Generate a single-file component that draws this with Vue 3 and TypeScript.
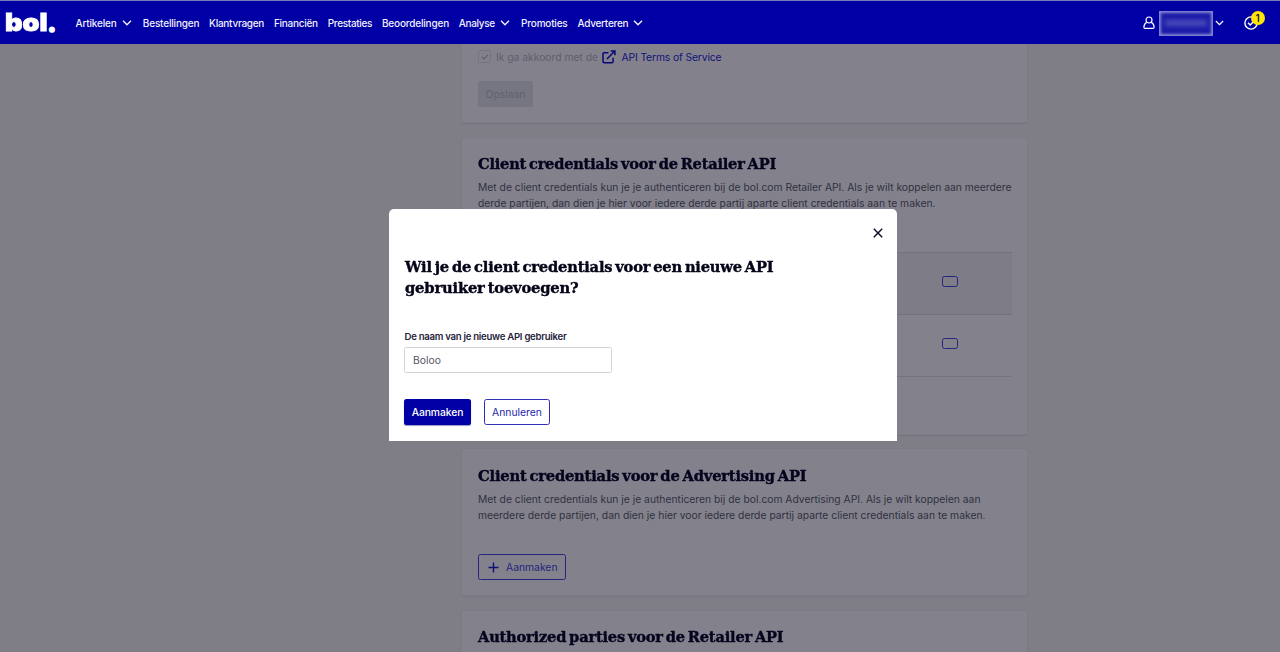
<script setup lang="ts">
interface NavItem { label: string; width: number; menu?: boolean }
interface Fit { w: number; squeeze?: boolean }

const nav: NavItem[] = [
  { label: 'Artikelen', width: 41, menu: true },
  { label: 'Bestellingen', width: 56.5 },
  { label: 'Klantvragen', width: 55 },
  { label: 'Financiën', width: 44 },
  { label: 'Prestaties', width: 44.5 },
  { label: 'Beoordelingen', width: 67 },
  { label: 'Analyse', width: 36, menu: true },
  { label: 'Promoties', width: 46.5 },
  { label: 'Adverteren', width: 51, menu: true },
]

/* Fits a line of text to a width: by tracking, or by condensing the glyphs. */
const vFit = {
  mounted(el: HTMLElement, binding: { value: Fit }) {
    const { w, squeeze } = binding.value
    const natural = el.getBoundingClientRect().width
    if (squeeze) {
      el.style.transform = `scaleX(${w / natural})`
      el.style.marginRight = `${w - natural}px`
    } else {
      el.style.letterSpacing = `${(w - natural) / (el.textContent ?? '').trim().length}px`
    }
  },
}
</script>

<template>
  <div class="app">
    <header class="bar">
      <div class="logo"><span v-fit="{ w: 42.5, squeeze: true }" class="line">bol</span><span class="dot">.</span></div>
      <nav class="nav">
        <a v-for="item in nav" :key="item.label" class="nav-item">
          <span v-fit="{ w: item.width }" class="line">{{ item.label }}</span>
          <svg v-if="item.menu" class="chev" width="10" height="6" viewBox="0 0 10 6"><path d="M1 .8 5 4.8 9 .8" /></svg>
        </a>
      </nav>
      <div class="account">
        <svg class="user" width="12" height="14" viewBox="0 0 12 14">
          <circle cx="6" cy="4" r="3" />
          <path d="M3.7 6.3C1.8 7.5.9 9.3.9 11.2Q.9 12.4 2 12.4H10Q11.1 12.4 11.1 11.2C11.1 9.3 10.2 7.5 8.3 6.3" />
        </svg>
        <span class="redacted"><i></i></span>
        <svg class="chev" width="9" height="6" viewBox="0 0 10 6"><path d="M1 .8 5 4.8 9 .8" /></svg>
        <div class="tasks">
          <svg width="14" height="14" viewBox="0 0 14 14"><circle cx="7" cy="7" r="6.1" /><path d="M4 6.8 6.2 9.1 10 5.1" /></svg>
          <span class="badge">1</span>
        </div>
      </div>
    </header>

    <main class="page">
      <section class="card terms">
        <div class="agree">
          <span class="check"><svg width="8" height="6" viewBox="0 0 8 6"><path d="M1 2.8 3.1 4.9 7 .9" /></svg></span>
          <span v-fit="{ w: 102 }" class="line">Ik ga akkoord met de</span>
          <svg class="ext" width="14" height="14" viewBox="0 0 14 14"><path d="M6.5 2.7H2.2Q1 2.7 1 3.9V11.6Q1 12.8 2.2 12.8H9.9Q11.1 12.8 11.1 11.6V7.8M4.9 9 12.6 1.2M8.7 1H12.9V5.2" /></svg>
          <a v-fit="{ w: 100 }" class="line">API Terms of Service</a>
        </div>
        <button class="btn off"><span v-fit="{ w: 40 }" class="line">Opslaan</span></button>
      </section>

      <section class="card retailer">
        <h2><span v-fit="{ w: 298, squeeze: true }" class="line">Client credentials voor de Retailer API</span></h2>
        <p>
          <span v-fit="{ w: 533.5 }" class="line">Met de client credentials kun je je authenticeren bij de bol.com Retailer API. Als je wilt koppelen aan meerdere</span>
          <span v-fit="{ w: 457.5 }" class="line">derde partijen, dan dien je hier voor iedere derde partij aparte client credentials aan te maken.</span>
        </p>
        <div class="rows">
          <div v-for="n in 2" :key="n" class="row"><span class="chip"></span></div>
        </div>
      </section>

      <section class="card advertising">
        <h2><span v-fit="{ w: 328.5, squeeze: true }" class="line">Client credentials voor de Advertising API</span></h2>
        <p>
          <span v-fit="{ w: 502.5 }" class="line">Met de client credentials kun je je authenticeren bij de bol.com Advertising API. Als je wilt koppelen aan</span>
          <span v-fit="{ w: 507.5 }" class="line">meerdere derde partijen, dan dien je hier voor iedere derde partij aparte client credentials aan te maken.</span>
        </p>
        <button class="btn add">
          <svg width="11" height="11" viewBox="0 0 11 11"><path d="M5.5 .5V10.5M.5 5.5H10.5" /></svg>
          <span v-fit="{ w: 51.5 }" class="line">Aanmaken</span>
        </button>
      </section>

      <section class="card authorized">
        <h2><span v-fit="{ w: 305.5, squeeze: true }" class="line">Authorized parties voor de Retailer API</span></h2>
      </section>
    </main>

    <div class="modal" role="dialog">
      <button class="close" aria-label="Sluiten">
        <svg width="10" height="10" viewBox="0 0 10 10"><path d="M.8 .8 9.2 9.2M9.2 .8 .8 9.2" /></svg>
      </button>
      <h1>
        <span v-fit="{ w: 368.5, squeeze: true }" class="line">Wil je de client credentials voor een nieuwe API</span>
        <span v-fit="{ w: 173.5, squeeze: true }" class="line">gebruiker toevoegen?</span>
      </h1>
      <label><span v-fit="{ w: 162 }" class="line">De naam van je nieuwe API gebruiker</span></label>
      <div class="input"><span v-fit="{ w: 28 }" class="line">Boloo</span></div>
      <div class="actions">
        <button class="btn primary"><span v-fit="{ w: 51.5 }" class="line">Aanmaken</span></button>
        <button class="btn ghost"><span v-fit="{ w: 50 }" class="line">Annuleren</span></button>
      </div>
    </div>
  </div>
</template>

<style>
body { margin: 0; overflow: hidden; }
</style>

<style scoped>
.app {
  position: relative;
  box-sizing: border-box;
  width: 1280px;
  height: 652px;
  overflow: hidden;
  display: flex;
  flex-direction: column;
  background: #7f7e87;
  font-family: Inter, "Liberation Sans", sans-serif;
  font-size: 10.3px;
  color: #30303f;
}
svg { display: block; fill: none; stroke: currentColor; flex: none; overflow: visible; }
.line { display: inline-block; white-space: nowrap; transform-origin: left center; }
.bar {
  flex: none;
  position: relative;
  z-index: 1;
  box-sizing: border-box;
  height: 44px;
  border-top: 1px solid #7b7bb4;
  background: #0000a4;
  color: #fff;
  display: flex;
  align-items: center;
}
.logo {
  width: 70px;
  padding-left: 5px;
  box-sizing: border-box;
  font-size: 24px;
  font-weight: 900;
  line-height: 29px;
  -webkit-text-stroke: .8px #fff;
  display: flex;
}
.dot { font-family: Lato, sans-serif; font-size: 28px; line-height: 26px; padding-left: 1px; -webkit-text-stroke-width: 1.6px; }
.nav { display: flex; align-items: center; gap: 9.8px; padding: 1px 0 0 5.5px; font-size: 10px; font-weight: 500; }
.nav-item { display: flex; align-items: center; gap: 5px; color: #f0f0ff; }
.chev { stroke-width: 1.4; margin-right: 1.5px; }
.account { margin-left: auto; display: flex; align-items: center; padding: 0 22.5px 0 0; }
.user { stroke-width: 1.2; margin-right: 3.5px; }
.redacted {
  box-sizing: border-box;
  width: 54px;
  height: 25px;
  margin: 1px 2px 0 0;
  background: #1a1aa9;
  box-shadow: inset 0 0 3px 1px #8787d2;
  border: 1px solid #7d7dcd;
  display: flex;
  align-items: center;
  justify-content: center;
}
.redacted i { width: 42px; height: 6px; background: #4d4dbb; filter: blur(2.5px); }
.tasks { position: relative; margin-left: 18.5px; }
.tasks svg { stroke-width: 1.4; }
.badge {
  position: absolute;
  left: 7px;
  top: -5px;
  width: 14px;
  height: 14px;
  border-radius: 50%;
  background: #ffe600;
  color: #16164a;
  font-size: 10px;
  font-weight: 600;
  line-height: 14px;
  text-align: center;
}
.page { width: 565px; margin-left: 462px; flex: 1; display: flex; flex-direction: column; }
.card {
  flex: none;
  box-sizing: border-box;
  padding: 0 16px;
  background: #83828c;
  border-radius: 2px;
  box-shadow: 0 0 0 1px #7c7c87, 0 1px 2px #656473;
}
.terms { height: 78px; margin-bottom: 16px; padding-top: 4px; }
.retailer { height: 296px; margin-bottom: 15px; }
.advertising { height: 146px; margin-bottom: 16px; }
.authorized { height: 80px; }
.agree { display: flex; align-items: center; height: 17px; color: #5f5e6c; }
.agree a { color: #11117a; margin-left: 6px; }
.check {
  box-sizing: border-box;
  width: 13px;
  height: 13px;
  border: 1px solid #757480;
  border-radius: 2px;
  margin-right: 5px;
  display: flex;
  align-items: center;
  justify-content: center;
}
.check svg { stroke-width: 1.1; }
.ext { color: #080878; stroke-width: 1.5; margin: 0 0 0 4px; }
.agree .ext + a { margin-left: 5.5px; }
.btn {
  box-sizing: border-box;
  height: 26px;
  padding: 0 7px;
  border: 1px solid transparent;
  border-radius: 2.5px;
  font: inherit;
  display: flex;
  align-items: center;
  justify-content: center;
}
.btn.off { width: 55px; margin-top: 16px; background: #767582; color: #62616f; border: 0; }
h1, h2 {
  margin: 0;
  font-family: "DejaVu Serif", serif;
  font-weight: 700;
  font-size: 15px;
  line-height: 21px;
  word-spacing: -2px;
  letter-spacing: -.2px;
  -webkit-text-stroke: .4px currentColor;
}
h2 { padding-top: 16px; color: #04041e; }
p { margin: 5px 0 0; line-height: 15.6px; display: flex; flex-direction: column; align-items: flex-start; }
.advertising h2 { padding-top: 17px; }
.rows { margin-top: 41px; margin-right: -1px; }
.row {
  box-sizing: border-box;
  height: 62.3px;
  border-top: 1px solid #737280;
  display: flex;
  align-items: center;
  justify-content: flex-end;
  padding: 0 54px 4px 0;
}
.row:first-child { background: #7e7d87; }
.row:last-child { border-bottom: 1px solid #737280; }
.chip { box-sizing: border-box; width: 16px; height: 11px; border: 1px solid #25257c; border-radius: 2.5px; }
.btn.add { width: 87.5px; margin-top: 31px; background: none; border-color: #25257c; color: #25257c; gap: 7px; padding-left: 9px; }
.add svg { color: #101078; stroke-width: 1.4; }
.modal {
  position: absolute;
  box-sizing: border-box;
  left: 389px;
  top: 209px;
  width: 508px;
  height: 232px;
  padding: 18px 13px 0 15px;
  background: #fff;
  border-radius: 5px 5px 0 0;
}
.close { display: block; margin-left: auto; padding: 1px; border: 0; background: none; color: #10102a; }
.close svg { stroke-width: 1.5; }
h1 { padding: 18px 0 0 1px; color: #050519; display: flex; flex-direction: column; align-items: flex-start; }
label { display: block; margin: 31px 0 0 .5px; height: 13px; line-height: 13px; font-size: 9.6px; font-weight: 600; color: #24243a; }
.input {
  box-sizing: border-box;
  width: 208px;
  height: 26px;
  margin-top: 4px;
  padding-left: 8px;
  border: 1px solid #d2d2d6;
  border-radius: 2.5px;
  line-height: 25px;
  color: #55555f;
}
.actions { display: flex; gap: 13px; margin-top: 26px; }
.primary { width: 67px; background: #0000a4; color: #fff; font-weight: 500; box-shadow: 0 1px 1px #9797c0; }
.ghost { width: 66px; background: #fff; border-color: #3030b7; color: #2626ae; }
</style>
